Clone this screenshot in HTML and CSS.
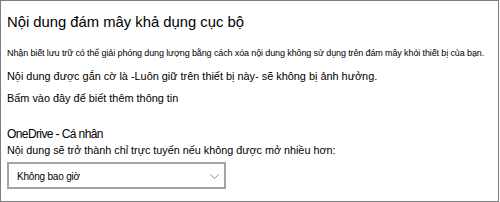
FILE: index.html
```html
<!DOCTYPE html>
<html lang="vi">
<head>
<meta charset="utf-8">
<link rel="stylesheet" href="styles.css">
</head>
<body>
<div class="panel">
  <h1 class="title">Nội dung đám mây khả dụng cục bộ</h1>
  <p class="note">Nhận biết lưu trữ có thể giải phóng dung lượng bằng cách xóa nội dung không sử dụng trên đám mây khỏi thiết bị của bạn.</p>
  <p class="text flagged">Nội dung được gắn cờ là -Luôn giữ trên thiết bị này- sẽ không bị ảnh hưởng.</p>
  <p class="text more">Bấm vào đây để biết thêm thông tin</p>
  <h2 class="sub">OneDrive - Cá nhân</h2>
  <p class="label">Nội dung sẽ trở thành chỉ trực tuyến nếu không được mở nhiều hơn:</p>
  <div class="select">
    <span class="value">Không bao giờ</span>
    <svg class="chev" width="9" height="5" viewBox="0 0 9 5"><path d="M0.5 0.5 L4.5 4.5 L8.5 0.5" fill="none" stroke="#8a8a8a" stroke-width="1"/></svg>
  </div>
</div>
</body>
</html>
```
FILE: styles.css
```css
html, body {
  margin: 0;
  padding: 0;
  background: #fff;
}
body {
  font-family: "Liberation Sans", Arial, sans-serif;
  color: #000;
}
.panel {
  box-sizing: border-box;
  width: 499px;
  height: 202px;
  border: 1px solid #7d7d7d;
  padding: 11px 6px 0 6px;
}
.title {
  margin: 0;
  font-size: 14.8px;
  font-weight: normal;
  line-height: 20px;
}
.note {
  margin: 15px 0 0 0;
  font-size: 9px;
  line-height: 12px;
  letter-spacing: -0.12px;
  white-space: nowrap;
}
.text {
  margin: 0;
  font-size: 10.9px;
  line-height: 14px;
}
.flagged {
  margin-top: 10px;
}
.more {
  margin-top: 8px;
}
.sub {
  margin: 21px 0 0 0;
  font-size: 12px;
  font-weight: normal;
  line-height: 16px;
  letter-spacing: -0.6px;
}
.label {
  margin: 1px 0 0 0;
  font-size: 10.8px;
  line-height: 14px;
}
.select {
  box-sizing: border-box;
  width: 219px;
  height: 27px;
  margin-top: 5px;
  border: 2px solid #a4a4a4;
  display: flex;
  align-items: flex-start;
  justify-content: space-between;
  padding: 0 5px 0 8px;
}
.value {
  margin-top: 7px;
  font-size: 10px;
  line-height: 12px;
  letter-spacing: -0.2px;
}
.chev {
  display: block;
  margin-top: 10px;
}
```
